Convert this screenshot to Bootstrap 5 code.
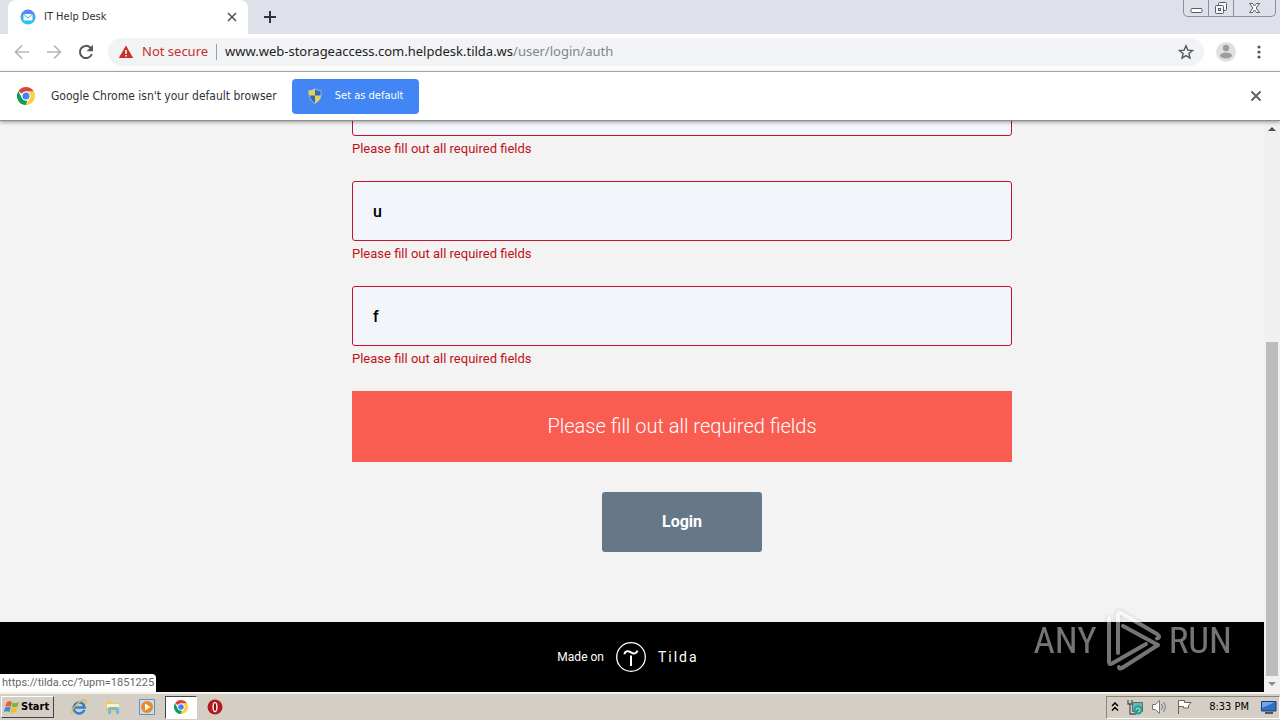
<!DOCTYPE html>
<html lang="en">
<head>
<meta charset="utf-8">
<meta name="viewport" content="width=device-width, initial-scale=1">
<title>IT Help Desk</title>
<link href="https://cdn.jsdelivr.net/npm/bootstrap@5.3.0/dist/css/bootstrap.min.css" rel="stylesheet">
<style>
  body { font-family: "DejaVu Sans Condensed", "DejaVu Sans", sans-serif; font-size: 12px; color: #303236; }
  svg { display: block; flex: none; }
  button { color: inherit; }
  .icon-btn { border: 0; background: none; padding: 0; display: flex; align-items: center; justify-content: center; }

  /* browser frame */
  .tabstrip { background: #dee1e9; height: 34px; padding-left: 8px; }
  .tab { width: 240px; background: #fff; border-radius: 8px 8px 0 0; padding: 0 10px 0 12px; font-size: 11px; }
  .new-tab { width: 28px; margin-left: 8px; }
  .win-controls { height: 17px; margin-right: 4px; border: 1px solid #8b909b; border-top: 0; border-radius: 0 0 5px 5px; }
  .win-controls button { width: 25px; border-right: 1px solid #8b909b; border-radius: 0; }
  .win-controls button:last-child { width: 41px; border: 0; }
  .toolbar { height: 38px; padding: 0 12px 2px; border-bottom: 1px solid #b3b5b4; background: #fff; }
  .omnibox { height: 28px; border-radius: 14px; background: #f1f3f4; padding: 0 10px; margin-left: 12px; font-family: "Noto Sans", sans-serif; font-size: 13px; }
  .omnibox .warn { color: #c5302c; }
  .omnibox .rule { width: 1px; height: 16px; background: #9a9da1; margin: 0 8px; }
  .omnibox a { color: #1f2124; text-decoration: none; }
  .omnibox a span { color: #80868b; }
  .infobar { height: 49px; background: #fff; padding: 0 16px 0 17px; position: relative; z-index: 1; border-bottom: 1px solid #8e8e8e; box-shadow: 0 1px 4px rgba(0,0,0,.4); }
  .infobar .message { margin: 0 15px 0 16px; }
  .default-btn { height: 35px; width: 127px; border-radius: 4px; border: 0; background: #4285f4; color: #fff; font-size: 11px; }
  .default-btn:hover { background: #4285f4; color: #fff; }

  /* page */
  .site { background: #f3f3f3; font-family: Roboto, sans-serif; min-height: 0; }
  .site .grid-wrap { max-width: 1200px; }
  .site .form-col { padding: 0 20px; }
  .field input { height: 60px; border: 1px solid #c4122c; border-radius: 3px; background: #f2f5fa; padding: 0 20px; font-size: 16px; font-weight: 500; color: #000; }
  .field label { display: block; color: #c01218; font-size: 13px; line-height: 20px; padding-top: 3px; margin-bottom: 22px; }
  .alert-box { background: #f95d51; color: #fff; font-size: 20px; font-weight: 300; line-height: 31px; padding: 20px; margin-bottom: 30px; }
  .login-btn { width: 160px; height: 60px; border: 0; border-radius: 3px; background: #667888; color: #fff; font-weight: 700; font-size: 16px; margin-bottom: 70px; }
  .site-footer { background: #000; min-height: 70px; padding-right: 8px; }
  .site-footer a { color: #fff; text-decoration: none; font-size: 12px; gap: 12px; }
  .site-footer .brand { font-size: 14px; letter-spacing: 2px; }
  .scroll-track { width: 16px; background: #f0f0f0; padding: 5px 2px; gap: 6px; }
  .scroll-thumb { background: #bcbcbc; height: 334px; }
  .link-status { position: absolute; left: 0; bottom: 0; height: 18px; line-height: 18px; background: #fff; color: #666; padding: 0 2px; border-radius: 0 4px 0 0; font-size: 11px; }
  .watermark { position: absolute; right: 48px; bottom: 20px; color: #fff; opacity: .46; gap: 7px; font-family: "Liberation Sans Narrow", "Roboto Condensed", sans-serif; font-size: 37px; line-height: 62px; filter: drop-shadow(0 0 2px rgba(0,0,0,.35)); }

  /* taskbar */
  .taskbar { height: 28px; background: #d5cec5; border-top: 2px solid #f5f2ec; padding: 0 0 0 1px; color: #000; }
  .start-btn { width: 53px; height: 22px; background: #d5cec5; border: 1px solid; border-color: #fff #444 #444 #fff; padding: 0 2px; font-weight: 700; font-size: 11px; gap: 1px; }
  .launch { width: 34px; height: 23px; }
  .launch.current { width: 32px; margin: 0 1px; background: #fff; border: 1px solid; border-color: #444 #fff #fff #444; }
  .tray { height: 23px; border: 1px solid; border-color: #8a857c #fff #fff #8a857c; padding: 0 2px 0 4px; font-size: 11px; }
</style>
</head>
<body class="vh-100 d-flex flex-column overflow-hidden">

<svg width="0" height="0" class="position-absolute" aria-hidden="true">
  <symbol id="chrome" viewBox="2 2 44 44">
    <path fill="#db4437" d="M24 2a22 22 0 0 1 19.050 11H24a11 11 0 0 0-9.530 5.500L5.500 12.100A22 22 0 0 1 24 2z"/>
    <path fill="#ffcd40" d="M43.050 13A22 22 0 0 1 24 46l9.530-16.500A11 11 0 0 0 33.500 18.500L24 13z"/>
    <path fill="#0f9d58" d="M5.200 12.500 14.470 29.500A11 11 0 0 0 27.500 34.500L24 46A22 22 0 0 1 5.200 12.500z"/>
    <circle cx="24" cy="24" r="11" fill="#fff"/><circle cx="24" cy="24" r="8.600" fill="#4285f4"/>
  </symbol>
</svg>

<header class="flex-shrink-0">
  <div class="tabstrip d-flex">
    <div class="tab d-flex align-items-center">
      <svg width="16" height="16" viewBox="0 0 16 16"><defs><linearGradient id="mailbg" x2="0" y2="1"><stop stop-color="#5b7df0"/><stop offset="1" stop-color="#20cfee"/></linearGradient></defs><circle cx="8" cy="8" r="7.500" fill="url(#mailbg)"/><rect x="3.500" y="5" width="9" height="6.500" rx="1" fill="#fff"/><path d="m4 5.500 4 3.500 4-3.500" fill="none" stroke="#4aa3ef"/></svg>
      <span class="ms-2 flex-grow-1">IT Help Desk</span>
      <button class="icon-btn" aria-label="Close tab"><svg width="12" height="12" viewBox="0 0 12 12"><path d="m2 2 8 8m0-8-8 8" stroke="#56595e" stroke-width="1.700"/></svg></button>
    </div>
    <button class="icon-btn new-tab" aria-label="New tab"><svg width="14" height="14" viewBox="0 0 14 14"><path d="M7 1v12M1 7h12" stroke="#303236" stroke-width="2"/></svg></button>
    <div class="win-controls d-flex ms-auto">
      <button class="icon-btn" aria-label="Minimize"><svg width="13" height="14" viewBox="0 0 13 14"><rect x="1" y="7.500" width="11" height="4" rx="1" fill="#fff" stroke="#555b66"/></svg></button>
      <button class="icon-btn" aria-label="Restore"><svg width="14" height="14" viewBox="0 0 14 14"><g fill="#f5f6f8" stroke="#555b66"><rect x="4.500" y="1.500" width="8" height="8" rx="1"/><rect x="1.500" y="4.500" width="8" height="8" rx="1"/><rect x="4.500" y="7.500" width="2" height="2"/></g></svg></button>
      <button class="icon-btn" aria-label="Close window"><svg width="13" height="14" viewBox="0 0 13 14"><path d="M1.500 2.500h3l2 2.500 2-2.500h3L8.200 7l3.300 4.500h-3l-2-2.500-2 2.500h-3L4.800 7z" fill="#fafafa" stroke="#555b66"/></svg></button>
    </div>
  </div>

  <nav class="toolbar d-flex align-items-center" aria-label="Browser">
    <button class="icon-btn" aria-label="Back"><svg width="20" height="20" viewBox="0 0 20 20"><path d="M17 10H4m6-6.500L3.500 10l6.500 6.500" fill="none" stroke="#b5b6b8" stroke-width="1.700"/></svg></button>
    <button class="icon-btn ms-2 ps-1" aria-label="Forward"><svg width="20" height="20" viewBox="0 0 20 20"><path d="M3 10h13m-6-6.500 6.500 6.500-6.500 6.500" fill="none" stroke="#b5b6b8" stroke-width="1.700"/></svg></button>
    <button class="icon-btn ms-2 ps-1" aria-label="Reload"><svg width="20" height="20" viewBox="0 0 20 20"><path d="M15.800 12a6.100 6.100 0 1 1-1.300-6.200L16 7.300" fill="none" stroke="#54575b" stroke-width="2"/><path d="M17 2.800v6.400h-6.400z" fill="#54575b"/></svg></button>
    <div class="omnibox d-flex align-items-center flex-grow-1">
      <svg width="16" height="16" viewBox="0 0 16 16"><path d="M8 1.500 15.200 14H.8z" fill="#c9302c"/><path d="M8 6v4m0 1v1.600" stroke="#fff" stroke-width="1.500"/></svg>
      <span class="warn ms-2">Not secure</span><span class="rule"></span>
      <a href="#" class="text-nowrap flex-grow-1">www.web-storageaccess.com.helpdesk.tilda.ws<span>/user/login/auth</span></a>
      <button class="icon-btn" aria-label="Bookmark"><svg width="16" height="16" viewBox="0 0 16 16"><path d="m8 1.800 1.800 4.300 4.700.4-3.600 3 1.100 4.600L8 11.600l-4 2.500 1.100-4.600-3.600-3 4.700-.4z" fill="none" stroke="#54575b" stroke-width="1.400"/></svg></button>
    </div>
    <button class="icon-btn ms-2 ps-1" aria-label="Profile"><svg width="20" height="20" viewBox="0 0 20 20"><circle cx="10" cy="10" r="10" fill="#dfe0e1"/><circle cx="10" cy="6" r="3.200" fill="#9b9d9f"/><ellipse cx="10" cy="13.500" rx="6" ry="3" fill="#9b9d9f"/></svg></button>
    <button class="icon-btn ms-3" aria-label="Menu"><svg width="16" height="20" viewBox="0 0 16 20"><g fill="#54575b"><circle cx="7" cy="5" r="1.600"/><circle cx="7" cy="10" r="1.600"/><circle cx="7" cy="15" r="1.600"/></g></svg></button>
  </nav>

  <div class="infobar d-flex align-items-center">
    <svg width="18" height="18"><use href="#chrome"/></svg>
    <span class="message">Google Chrome isn't your default browser</span>
    <button class="default-btn btn p-0 d-flex align-items-center justify-content-center gap-2">
      <svg width="16" height="16" viewBox="0 0 16 16"><path d="M8 .8C6 2.200 4 2.600 1.800 2.600 1.600 9 3.500 13 8 15.500z" fill="#e9d34a"/><path d="M8 .8c2 1.400 4 1.800 6.200 1.800C14.400 9 12.500 13 8 15.500z" fill="#2f69c5"/><path d="M1.900 7.500H8v8C4.300 13.400 2.300 11 1.900 7.500z" fill="#2f69c5"/><path d="M8 7.500h6.100c-.4 3.500-2.400 5.900-6.100 8z" fill="#e9d34a"/><path d="M8 .8c2 1.400 4 1.800 6.200 1.800C14.400 9 12.500 13 8 15.500 3.500 13 1.600 9 1.800 2.600 4 2.600 6 2.200 8 .8z" fill="none" stroke="#bcc7cf" stroke-width=".8"/></svg>
      <span class="ps-1">Set as default</span></button>
    <button class="icon-btn ms-auto" aria-label="Dismiss"><svg width="16" height="16" viewBox="0 0 16 16"><path d="m3.500 3.500 9 9m0-9-9 9" stroke="#606367" stroke-width="2"/></svg></button>
  </div>
</header>

<div class="site flex-grow-1 d-flex position-relative overflow-hidden">
  <main class="flex-grow-1 d-flex flex-column justify-content-end">
    <form class="grid-wrap container-fluid p-0">
      <div class="row g-0"><div class="form-col col-7 offset-3">
        <div class="field"><input id="f1" class="w-100" type="text"><label for="f1">Please fill out all required fields</label></div>
        <div class="field"><input id="f2" class="w-100" type="text" value="u"><label for="f2">Please fill out all required fields</label></div>
        <div class="field"><input id="f3" class="w-100" type="text" value="f"><label for="f3">Please fill out all required fields</label></div>
        <div class="alert-box text-center" role="alert">Please fill out all required fields</div>
        <div class="text-center"><button type="button" class="login-btn">Login</button></div>
      </div></div>
    </form>
    <footer class="site-footer d-flex align-items-center justify-content-center">
      <a href="#" class="d-flex align-items-center"><span>Made on</span>
        <svg width="30" height="30" viewBox="0 0 30 30"><circle cx="15" cy="15" r="14.300" fill="none" stroke="#fff" stroke-width="1.300"/><path d="M8.300 12.300c.8-3.600 3.700-3.800 6.700-1.900s5.500 1.300 6.500-1.800M15 13.500V24" fill="none" stroke="#fff" stroke-width="2"/></svg>
        <span class="brand">Tilda</span></a>
    </footer>
  </main>
  <div class="scroll-track d-flex flex-column align-items-center">
    <svg width="8" height="5" viewBox="0 0 8 5"><path d="M0 5l4-4 4 4z" fill="#505050"/></svg>
    <div class="scroll-thumb w-100 mt-auto"></div>
    <svg width="8" height="5" viewBox="0 0 8 5"><path d="M0 0l4 4 4-4z" fill="#8a8a8a"/></svg>
  </div>
  <div class="link-status">https://tilda.cc/?upm=1851225</div>
  <div class="watermark d-flex align-items-center" aria-hidden="true">
    <span>ANY</span>
    <svg width="58" height="62" viewBox="0 0 58 62"><g fill="none" stroke="#fff" stroke-width="4" stroke-linejoin="round" stroke-linecap="round"><path d="M5 8v44q0 3 3 1.500L42 34"/><path d="M14 43V5q0-4 3-2l36 21q4 3 0 4.500"/><path d="M19 16 54 35 18 58q-3 1.500-3-1"/></g></svg>
    <span>RUN</span>
  </div>
</div>

<footer class="taskbar d-flex align-items-center flex-shrink-0">
  <button class="start-btn d-flex align-items-center me-2">
    <svg width="16" height="16" viewBox="0 0 16 16"><path d="M2.500 3.500Q5 1.500 8 3L6.800 7.500Q4.500 6.300 1.300 7.800z" fill="#e8622b"/><path d="M8.800 3.400q3 1.200 6-.4l-1.300 4.600q-3 1.500-5.900.2z" fill="#7fb539"/><path d="M1.100 8.700q3-1.500 5.500-.3l-1.300 4.500Q3 11.700 0 13z" fill="#3f87d6"/><path d="M7.400 8.800q3 1.200 5.900-.3L12 13q-3 1.500-5.900.2z" fill="#f2bd2c"/></svg>
    <span>Start</span></button>
  <button class="icon-btn launch" aria-label="Internet Explorer"><svg width="16" height="16" viewBox="0 0 16 16"><path d="M13.400 10.800A5.500 5.500 0 1 1 13.700 8.500H4" fill="none" stroke="#2d82d2" stroke-width="2.500"/><path d="M1 14.500C-.5 12 8-.5 15 1.500q1 1-.8 3.500" fill="none" stroke="#e5ba3a" stroke-width="1.300"/></svg></button>
  <button class="icon-btn launch" aria-label="File Explorer"><svg width="16" height="16" viewBox="0 0 16 16"><path d="M1 2h5l1 2h7v9H1z" fill="#eccb67"/><path d="M2 5h12v4H2z" fill="#fff3ba"/><path d="M3 15V9.500q0-1.500 2-1.500h7q2 0 2 1.500V15h-3v-4H6v4z" fill="#74b9df"/></svg></button>
  <button class="icon-btn launch" aria-label="Media Player"><svg width="16" height="16" viewBox="0 0 16 16"><path d="M.5.500h15v15H.5z" fill="#c9def1" stroke="#5a91c8"/><circle cx="8" cy="8" r="6" fill="#ef8820"/><path d="M6 4.500v7l5.500-3.500z" fill="#fff"/></svg></button>
  <button class="icon-btn launch current" aria-label="Chrome"><svg width="14" height="14"><use href="#chrome"/></svg></button>
  <button class="icon-btn launch" aria-label="Opera"><svg width="16" height="16" viewBox="0 0 16 16"><circle cx="8" cy="8" r="7.500" fill="#b81820"/><ellipse cx="8" cy="8" rx="2.600" ry="5.300" fill="#fff"/><ellipse cx="8" cy="8" rx="1.200" ry="4" fill="#8d1017"/></svg></button>
  <div class="tray d-flex align-items-center ms-auto">
    <button class="icon-btn me-2" aria-label="Show hidden icons"><svg width="8" height="10" viewBox="0 0 8 10"><path d="m1 4 3-3 3 3M1 8.500l3-3 3 3" fill="none" stroke="#000" stroke-width="1.500"/></svg></button>
    <svg width="16" height="16" viewBox="0 0 16 16"><path d="M5.500 3.500h10v9h-10z" fill="#65b7b5" stroke="#576b70"/><path d="M1 1v4h4V1M3 5v10h6" fill="none" stroke="#555" stroke-width="1.300"/><circle cx="11" cy="11" r="4.500" fill="#289e90"/><path d="M9 11a2 2 0 1 1 2 2" fill="none" stroke="#c8ece5"/></svg>
    <svg class="ms-2" width="17" height="16" viewBox="0 0 17 16"><path d="M1.500 5.500h3l4-4v13l-4-4h-3z" fill="#fff" stroke="#777"/><path d="M10.500 5q2 3 0 6m2-8q3.500 5 0 10" fill="none" stroke="#777"/></svg>
    <svg class="ms-2" width="17" height="16" viewBox="0 0 17 16"><path d="M2.500 15V1.500h6v2h6.500l-2.500 3v2.500h-5V7.500h-5" fill="#fff" stroke="#666"/></svg>
    <time class="ms-3 me-2">8:33 PM</time>
    <svg class="ms-1" width="16" height="15" viewBox="0 0 16 15"><path d="M.5 1.500h14.500v9.500H.5z" fill="#2e70c8" stroke="#193d78"/><path d="M1 2h13L1 8z" fill="#6ea9e7"/><path d="M4 13h8" stroke="#555" stroke-width="2"/></svg>
  </div>
</footer>

<script src="https://cdn.jsdelivr.net/npm/bootstrap@5.3.0/dist/js/bootstrap.bundle.min.js"></script>
</body>
</html>
